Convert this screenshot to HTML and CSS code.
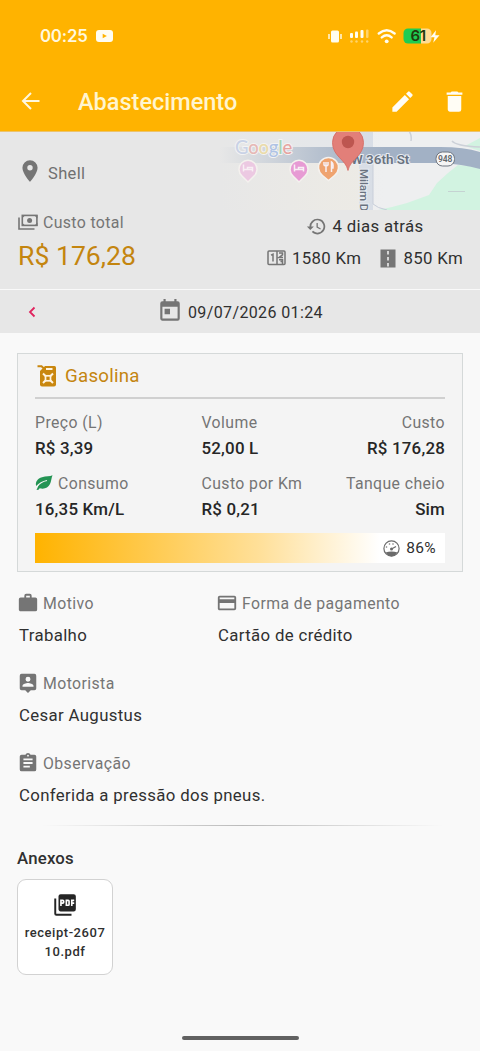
FILE: index.html
```html
<!DOCTYPE html>
<html lang="pt-BR">
<head>
<meta charset="utf-8">
<meta name="viewport" content="width=device-width">
<title>Abastecimento</title>
<link rel="stylesheet" href="styles.css">
</head>
<body>
<header class="top">
  <div class="status">
    <span class="clock">00:25</span>
    <svg class="yt" width="17" height="12" viewBox="0 0 17 12"><rect width="17" height="12" rx="3" fill="#fffdf2"/><path d="M6.700 3.800v4.400L10.900 6z" fill="#ffb300"/></svg>
    <span class="grow"></span>
    <svg width="112" height="18" viewBox="328 26 112 18">
      <g fill="#fffdf0">
        <rect x="331" y="29.500" width="8" height="12" rx="1.500"/>
        <rect x="328.300" y="33" width="1.400" height="5"/><rect x="340.300" y="33" width="1.400" height="5"/>
        <rect x="350" y="32" width="3" height="5" rx="1"/><rect x="355" y="30.500" width="3" height="6.500" rx="1"/><rect x="360.500" y="29" width="3" height="8" rx="1"/>
        <g opacity=".45"><rect x="366" y="28.500" width="2.500" height="8.500" rx="1"/><circle cx="351.500" cy="40.500" r="1.200"/><circle cx="356.500" cy="40.500" r="1.200"/><circle cx="362" cy="40.500" r="1.200"/><circle cx="367.200" cy="40.500" r="1.200"/></g>
        <circle cx="386.700" cy="40.300" r="1.900"/>
      </g>
      <path d="M378.800 32.500q7.900-6.600 15.800 0M381.800 36.400q4.900-4.200 9.800 0" fill="none" stroke="#fffdf0" stroke-width="2.400" stroke-linecap="round"/>
      <path d="M408 27.500h13v15h-13a4.500 4.500 0 0 1-4.500-4.500v-6a4.500 4.500 0 0 1 4.500-4.500z" fill="#1fcc52"/>
      <path d="M421 27.500h6a4.500 4.500 0 0 1 4.500 4.500v6a4.500 4.500 0 0 1-4.500 4.500h-6z" fill="#ffdc94"/>
      <path d="M436 29.300l-5.500 7h4l-1.300 5.400 6.300-7.400h-4.200z" fill="#fffdf0"/>
      <text x="418" y="40" class="battery">61</text>
    </svg>
  </div>
  <div class="appbar">
    <svg class="back" width="24" height="24" viewBox="0 0 24 24"><path d="M20.500 12H4M12 4L4 12l8 8" fill="none" stroke="#fff8df" stroke-width="2"/></svg>
    <h1>Abastecimento</h1>
    <svg class="edit" width="27" height="27" viewBox="0 0 24 24" fill="#fffdf5"><path d="M3 17.250V21h3.750L17.810 9.940l-3.750-3.750L3 17.250zM20.710 7.040a1 1 0 0 0 0-1.410l-2.340-2.340a1 1 0 0 0-1.410 0l-1.830 1.830 3.750 3.750 1.830-1.830z"/></svg>
    <svg width="27" height="27" viewBox="0 0 24 24" fill="#fffdf5"><path d="M6 19c0 1.100.9 2 2 2h8a2 2 0 0 0 2-2V7H6v12zM19 4h-3.500l-1-1h-5l-1 1H5v2h14V4z"/></svg>
  </div>
</header>

<section class="summary">
  <svg class="map" width="260" height="79" viewBox="220 131 260 79">
    <defs>
      <linearGradient id="fade" x1="220" x2="385" y1="0" y2="0" gradientUnits="userSpaceOnUse"><stop offset="0" stop-color="#e7e7e7"/><stop offset=".2" stop-color="#e7e7e7" stop-opacity=".78"/><stop offset=".6" stop-color="#e7e7e7" stop-opacity=".3"/><stop offset="1" stop-color="#e7e7e7" stop-opacity="0"/></linearGradient>
    </defs>
    <rect x="220" y="131" width="260" height="79" fill="#edebe5"/>
    <path d="M220 131h135v16H220z" fill="#e4e7eb"/>
    <path d="M373 131h107v79H373z" fill="#eeeff0"/>
    <path d="M480 138l-15 8 15 5zM480 167l-22-2-10 8-11 10-8 12-22 8-15 4-14 3h102z" fill="#d2f3e1"/>
    <path d="M353 131h20v79h-14v-46h-6z" fill="#d7dde6"/>
    <path d="M409 131q3 4 2 10M452 141q4 5 28 6" fill="none" stroke="#cdd1d8" stroke-width="1.500"/>
    <path d="M448 191.500h17" stroke="#c5d3d2"/>
    <path d="M220 147h220q24 0 40 5v17q-18-5-40-6H220z" fill="#a2b1c5"/>
    <path d="M373 163v41q4 4 14 6" fill="none" stroke="#c6cdd9"/>
    <rect x="220" y="131" width="165" height="79" fill="url(#fade)"/>
    <g class="logo"><text x="235" y="154"><tspan fill="#c9d2e6">G</tspan><tspan fill="#e6b8b6">o</tspan><tspan fill="#eadbaa">o</tspan><tspan fill="#afc3e5">g</tspan><tspan fill="#a8d4b3">l</tspan><tspan fill="#e6a3a0">e</tspan></text></g>
    <g stroke="#f4f1ee" stroke-width="1.500">
      <path d="M248 182l-6-6a9 9 0 1 1 12 0z" fill="#ecc9e2"/>
      <path d="M299 182l-6-6a9 9 0 1 1 12 0z" fill="#e79bd4"/>
      <path d="M328.500 180.500l-6-5a10 10 0 1 1 12 0z" fill="#efa36f"/>
    </g>
    <g fill="none" stroke="#f8eff4" stroke-width="1.500"><path d="M243.500 164.500v7m0-2h9v2m0-2v-2h-5v2M294.500 164.500v7m0-2h9v2m0-2v-2h-5v2"/><path d="M326 162v10m-2-10v3q2 2 4 0v-3M331.500 172v-10q2 1 1.500 6h-1.500"/></g>
    <text x="351" y="163.500" class="street">W 36th St</text>
    <text transform="translate(359.500 169) rotate(90)" class="street side">Milam D</text>
    <rect x="436" y="152" width="18.500" height="14" rx="6.500" fill="#f5f5f5" stroke="#6f7680"/>
    <text x="445.200" y="162.200" class="shield">948</text>
    <path d="M348 170.500c-2-11-15.500-14-15.500-28a15.500 15.500 0 0 1 31 0c0 14-13.500 17-15.500 28z" fill="#e27f79" stroke="#d66760" stroke-width=".8"/>
    <circle cx="348" cy="142" r="6.200" fill="#bd5650"/>
  </svg>
  <div class="station">
    <svg width="26" height="26" viewBox="0 0 24 24" fill="#757575"><path d="M12 2a7 7 0 0 0-7 7c0 5.250 7 13 7 13s7-7.750 7-13a7 7 0 0 0-7-7zm0 9.500a2.500 2.500 0 1 1 0-5 2.500 2.500 0 0 1 0 5z"/></svg>
    <span>Shell</span>
  </div>
  <div class="totals">
    <div class="total">
      <div class="label"><svg width="22" height="18" viewBox="0 0 22 18"><path d="M2 4.500V16h15.500" fill="none" stroke="#757575" stroke-width="1.600"/><rect x="5.300" y="2.400" width="14.600" height="10" fill="none" stroke="#757575" stroke-width="1.600"/><circle cx="12.600" cy="7.400" r="2.500" fill="#757575"/><path d="M5 2h3.500L5 5.500zM20.500 2v3.500L17 2zM5 13V9.500L8.500 13zM20.500 13H17l3.500-3.500z" fill="#757575"/></svg><span>Custo total</span></div>
      <div class="amount">R$ 176,28</div>
    </div>
    <div class="facts">
      <div class="fact"><svg width="21" height="21" viewBox="0 0 24 24" fill="#757575"><path d="M13 3a9 9 0 0 0-9 9H1l3.890 3.890.07.14L9 12H6a7 7 0 1 1 2.050 4.940l-1.420 1.420A9 9 0 1 0 13 3zm-1 5v5l4.280 2.540.72-1.210-3.500-2.080V8H12z"/></svg><span>4 dias atrás</span></div>
      <div class="fact pair">
        <svg width="19" height="16" viewBox="0 0 19 16" fill="none" stroke="#757575" stroke-width="1.500"><rect x="1" y="1" width="17" height="13.500" rx="1"/><path d="M10 1v13.500M4 5.200l2-1v7.300M12 3h3.500v1.800L12 7.500h4M12 9.700h3.500v1.700h-2M15.500 11.400v3"/></svg><span class="km">1580 Km</span>
        <svg class="road" width="16" height="19" viewBox="0 0 16 19"><rect x=".5" y=".5" width="15" height="18" fill="#757575"/><path d="M8 2v15.500" stroke="#eee" stroke-width="1.600" stroke-dasharray="3.500 2.500"/></svg><span>850 Km</span>
      </div>
    </div>
  </div>
</section>

<nav class="datebar">
  <svg class="prev" width="8" height="12" viewBox="0 0 8 12"><path d="M6.500 1.500L2 6l4.500 4.500" fill="none" stroke="#e0245e" stroke-width="1.800"/></svg>
  <svg class="cal" width="26" height="26" viewBox="0 0 24 24" fill="#757575"><path d="M19 3h-1V1h-2v2H8V1H6v2H5a2 2 0 0 0-2 2v14c0 1.100.9 2 2 2h14a2 2 0 0 0 2-2V5a2 2 0 0 0-2-2zm0 16H5V8h14v11zM7 10h5v5H7z"/></svg>
  <span>09/07/2026 01:24</span>
</nav>

<main>
  <section class="fuel">
    <h2><svg width="20" height="22" viewBox="0 0 20 22"><path d="M.5 1.200h4l2.200 2" fill="none" stroke="#c9870f" stroke-width="2"/><path d="M8 1h9.500A1.500 1.500 0 0 1 19 2.500v17a2 2 0 0 1-2 2H5a2 2 0 0 1-2-2V6z" fill="#c9870f"/><path d="M9 4h6.500" stroke="#fff3df" stroke-width="2"/><path d="M6 8.500l3 3M16 8.500l-3 3M6 18l3-3M16 18l-3-3" stroke="#fff3df" stroke-width="2"/><rect x="8.500" y="10.800" width="5" height="5" fill="none" stroke="#fff3df" stroke-width="1.700"/></svg><span>Gasolina</span></h2>
    <div class="grid">
      <div class="cell"><span class="lbl">Preço (L)</span><b>R$ 3,39</b></div>
      <div class="cell"><span class="lbl">Volume</span><b>52,00 L</b></div>
      <div class="cell end"><span class="lbl">Custo</span><b>R$ 176,28</b></div>
      <div class="cell"><span class="lbl"><svg class="leaf" width="18" height="16" viewBox="0 0 18 16"><path d="M17.500.3C15 1.500 11 1.200 7 2.200 2.500 3.500 0 7 1.200 11l3.300-2.800L1.500 15l2-.2 1.200-1.500c5 1.200 8.300-.6 10.300-4.300C16.300 6.500 16.300 3 17.500.3z" fill="#249454"/><path d="M1.500 12C4.500 8 8 6.300 12 5.500" fill="none" stroke="#f4f4f4" stroke-width="1.200"/></svg>Consumo</span><b>16,35 Km/L</b></div>
      <div class="cell"><span class="lbl">Custo por Km</span><b>R$ 0,21</b></div>
      <div class="cell end"><span class="lbl">Tanque cheio</span><b>Sim</b></div>
    </div>
    <div class="gauge"><svg width="17" height="17" viewBox="0 0 17 17"><circle cx="8.500" cy="8.500" r="7.600" fill="none" stroke="#6b6b6b" stroke-width="1.200"/><path d="M2.500 12.500q6-2 12 0-2.500 3.700-6 3.700t-6-3.700z" fill="#6b6b6b"/><circle cx="8.500" cy="9" r="1.500" fill="#6b6b6b"/><path d="M8.500 9l4.500-2.500" stroke="#6b6b6b" stroke-width="1.400"/><g fill="#777"><circle cx="3.500" cy="7" r=".8"/><circle cx="6.500" cy="4" r=".8"/><circle cx="10" cy="4" r=".8"/></g></svg><span>86%</span></div>
  </section>

  <section class="details">
    <div class="item"><div class="lbl"><svg width="22" height="22" viewBox="0 0 24 24" fill="#757575"><path d="M20 6h-4V4a2 2 0 0 0-2-2h-4a2 2 0 0 0-2 2v2H4a2 2 0 0 0-2 2v11c0 1.100.9 2 2 2h16a2 2 0 0 0 2-2V8a2 2 0 0 0-2-2zm-6 0h-4V4h4v2z"/></svg>Motivo</div><p>Trabalho</p></div>
    <div class="item"><div class="lbl"><svg width="22" height="22" viewBox="0 0 24 24" fill="#757575"><path d="M20 4H4a2 2 0 0 0-2 2v12c0 1.110.89 2 2 2h16a2 2 0 0 0 2-2V6a2 2 0 0 0-2-2zm0 14H4v-6h16v6zm0-10H4V6h16v2z"/></svg>Forma de pagamento</div><p>Cartão de crédito</p></div>
    <div class="item wide"><div class="lbl"><svg width="22" height="22" viewBox="0 0 24 24" fill="#757575"><path d="M19 2H5a2 2 0 0 0-2 2v14a2 2 0 0 0 2 2h4l3 3 3-3h4a2 2 0 0 0 2-2V4a2 2 0 0 0-2-2zm-7 3.300a2.700 2.700 0 1 1 0 5.400 2.700 2.700 0 0 1 0-5.400zM18 16H6v-.9c0-2 4-3.100 6-3.100s6 1.100 6 3.100v.9z"/></svg>Motorista</div><p>Cesar Augustus</p></div>
    <div class="item wide"><div class="lbl"><svg width="22" height="22" viewBox="0 0 24 24" fill="#757575"><path d="M19 3h-4.180a3 3 0 0 0-5.640 0H5a2 2 0 0 0-2 2v14a2 2 0 0 0 2 2h14a2 2 0 0 0 2-2V5a2 2 0 0 0-2-2zm-7 0a1 1 0 1 1 0 2 1 1 0 0 1 0-2zm2 14H7v-2h7v2zm3-4H7v-2h10v2zm0-4H7V7h10v2z"/></svg>Observação</div><p>Conferida a pressão dos pneus.</p></div>
  </section>

  <hr>
  <h3>Anexos</h3>
  <div class="file">
    <svg width="26" height="26" viewBox="0 0 24 24"><path d="M3 6v14a1 1 0 0 0 1 1h14" fill="none" stroke="#252525" stroke-width="1.800"/><path d="M20 2H8a2 2 0 0 0-2 2v12c0 1.100.9 2 2 2h12a2 2 0 0 0 2-2V4a2 2 0 0 0-2-2zm-8.500 7.500A1.500 1.500 0 0 1 10 11H9v2H7.500V7H10a1.500 1.500 0 0 1 1.500 1.500v1zm5 2A1.500 1.500 0 0 1 15 13h-2.500V7H15a1.500 1.500 0 0 1 1.500 1.500v3zm4-3H19v1h1.500V11H19v2h-1.500V7h3v1.500zM9 9.500h1v-1H9v1zm5 2h1v-3h-1v3z" fill="#252525"/></svg>
    <span>receipt-2607<br>10.pdf</span>
  </div>
</main>
<div class="homebar"></div>
</body>
</html>
```
FILE: styles.css
```css
* { box-sizing: border-box; }
body {
  margin: 0;
  width: 480px;
  height: 1051px;
  display: flex;
  flex-direction: column;
  background: #f9f9f9;
  font-family: Roboto, "Liberation Sans", sans-serif;
  font-size: 16.800px;
  letter-spacing: .35px;
  color: #303030;
  overflow: hidden;
}
svg { flex: none; display: block; }
h1, h2, h3, p { margin: 0; font-weight: 400; }
span, b, p, h1, h2, h3 { white-space: nowrap; }

.top { height: 132px; background: #ffb300; border-bottom: 1px solid #ecc36c; }
.status { height: 71px; display: flex; align-items: center; padding: 0 40px; }
.clock { font: 600 16.800px Inter, sans-serif; letter-spacing: -.2px; color: #fff8df; width: 56px; }
.grow { flex: 1; }
.battery { font: 600 15px Inter, sans-serif; text-anchor: middle; letter-spacing: -.5px; fill: #213a0c; }
.appbar { height: 60px; display: flex; align-items: center; padding: 0 12px 0 19px; }
.appbar h1 { margin-left: 35px; padding-top: 1px; flex: 1; font-size: 23.500px; font-weight: 500; letter-spacing: 0; color: #fff5cf; }
.edit { margin-right: 25px; }

.summary { position: relative; height: 157px; background: #e7e7e7; padding: 25px 17px 0; }
.map { position: absolute; right: 0; top: -1px; clip-path: inset(1px 0 0 0); }
.logo { font: 500 18.500px Lato, sans-serif; letter-spacing: -.2px; }
.logo text { stroke: #f3f3f3; stroke-width: 2px; paint-order: stroke; }
.street { font: 600 13.400px Roboto, sans-serif; letter-spacing: 0; fill: #69727f; stroke: #e9edf2; stroke-width: 2px; paint-order: stroke; }
.side { font-weight: 500; font-size: 11.600px; letter-spacing: -.1px; }
.shield { font: 600 8.500px Roboto, sans-serif; letter-spacing: 0; text-anchor: middle; fill: #62666c; }
.station { height: 32px; display: flex; align-items: center; gap: 5px; color: #707070; font-size: 16.500px; }
.station svg { margin-top: -5px; }
.totals { display: flex; justify-content: space-between; padding-top: 21px; }
.label { height: 24px; display: flex; align-items: center; gap: 4px; color: #757575; font-size: 15.900px; }
.amount { height: 42px; line-height: 44px; padding-left: 1px; font-size: 26.600px; letter-spacing: 0; color: #c4850f; }
.facts { display: flex; flex-direction: column; align-items: center; }
.fact { height: 32px; display: flex; align-items: center; gap: 5px; }
.pair { gap: 6px; }
.km { margin-right: 13px; }
.road { margin-right: 1px; }

.datebar { height: 43px; display: flex; align-items: center; margin-top: 1px; background: #e7e7e7; font-size: 16px; letter-spacing: .37px; }
.prev { margin: 0 121px 0 28px; }
.cal { margin-top: -2px; }
.datebar span { margin-left: 5px; padding-top: 1px; }

main { padding: 20px 17px 0; flex: 1; }
.fuel { height: 219px; border: 1px solid #d5d9d9; background: #f4f4f4; padding: 0 17px; }
.fuel h2 { height: 45px; display: flex; align-items: center; gap: 8px; padding: 1px 0 0 2px; border-bottom: 2px solid #d0d0d0; font-size: 18.700px; letter-spacing: .25px; color: #c4850f; }
.grid { display: grid; grid-template-columns: 166.500px 120px 1fr; grid-auto-rows: 61px; padding-top: 9px; }
.cell { display: flex; flex-direction: column; }
.end { align-items: flex-end; }
.lbl { height: 28px; display: flex; align-items: center; color: #757575; font-size: 15.800px; letter-spacing: .42px; }
.leaf { margin-right: 5px; }
.cell b { height: 26px; line-height: 25px; font-weight: 500; font-size: 16.900px; letter-spacing: .2px; color: #262626; }
.gauge { height: 30px; margin-top: 3px; display: flex; align-items: center; justify-content: flex-end; gap: 6px; padding-right: 9px; font-size: 15.500px; background: linear-gradient(90deg, #ffb300 0%, #ffe09a 55%, #fff 84%); }

.details { display: grid; grid-template-columns: 199px 1fr; grid-auto-rows: 80px; padding-top: 17px; }
.wide { grid-column: 1 / -1; }
.item .lbl { gap: 4px; }
.item p { height: 36px; line-height: 36px; padding-left: 2px; }
hr { height: 1px; border: 0; margin: -4px 20px 0 25px; background: linear-gradient(90deg, transparent, #bbb 50%, transparent); }
h3 { height: 53px; line-height: 64px; font-size: 16.800px; font-weight: 500; letter-spacing: .2px; }
.file { width: 96px; height: 96px; border: 1px solid #d2d2d2; border-radius: 9px; background: #fff; display: flex; flex-direction: column; align-items: center; padding-top: 12px; gap: 5px; font-size: 13px; font-weight: 500; letter-spacing: .55px; line-height: 19px; text-align: center; }
.homebar { width: 117px; height: 4px; border-radius: 2px; margin: 0 auto 11px; background: #616161; }
```
